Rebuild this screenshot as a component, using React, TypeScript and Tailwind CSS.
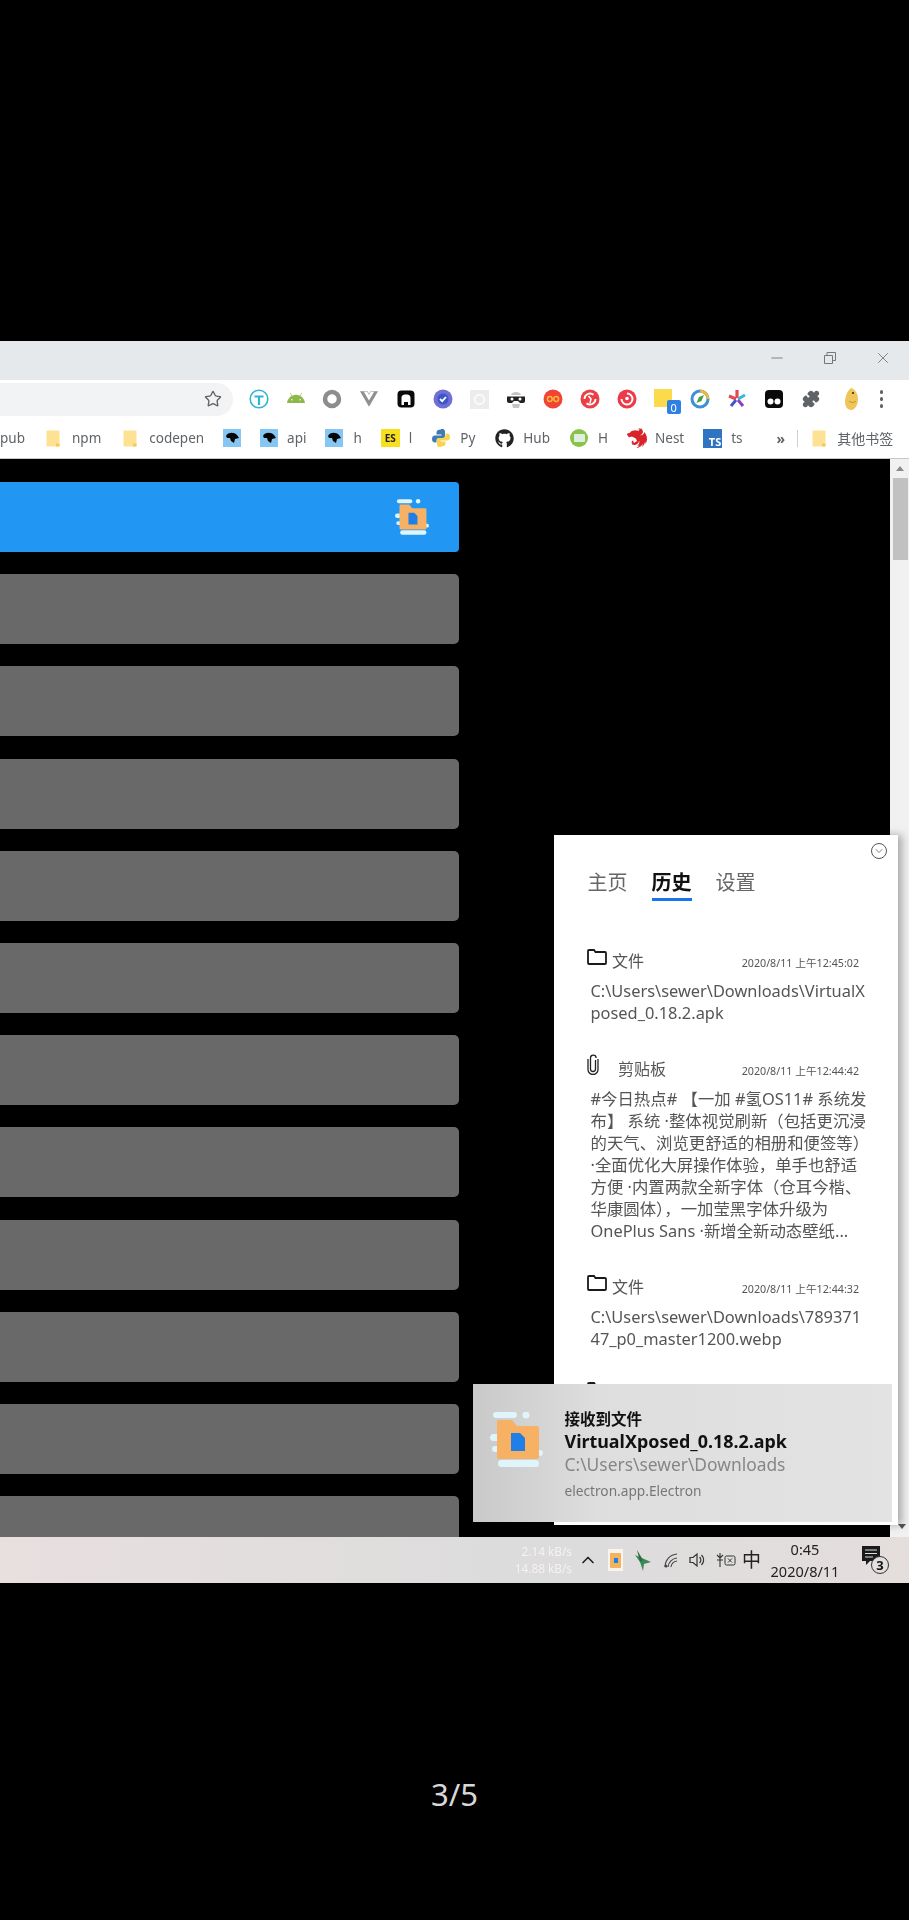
import { ChevronDown, ChevronUp, Minus, Puzzle, Star, X } from "lucide-react";
import { FaAndroid, FaGithub } from "react-icons/fa";
import { SiNestjs, SiVuedotjs } from "react-icons/si";

const FONT = "font-['Noto_Sans','Noto_Sans_CJK_SC',sans-serif]";

const FolderLogo = ({ className }: { className: string }) => (
  <svg viewBox="0 0 53 55" className={className}>
    <rect x="3" y="0" width="24" height="6" rx="3" fill="#dff5fb" />
    <circle cx="36" cy="3" r="3.5" fill="#dff5fb" />
    <rect x="0" y="22" width="10" height="7" rx="3.5" fill="#dff5fb" />
    <rect x="2" y="34" width="8" height="6" rx="3" fill="#dff5fb" />
    <rect x="44" y="38" width="9" height="6" rx="3" fill="#dff5fb" />
    <rect x="8" y="48" width="41" height="7" rx="3.5" fill="#dff5fb" />
    <path d="M7 10a2 2 0 0 1 2-2h13l5 6h20a2 2 0 0 1 2 2v29a2 2 0 0 1-2 2H9a2 2 0 0 1-2-2z" fill="#f6b164" />
    <path d="M21 21h9l5 5v13H21z" fill="#1f7fe6" />
  </svg>
);

const BookmarkFolder = () => (
  <svg viewBox="0 0 14 17" className="h-[17px] w-[14px]">
    <path d="M0.5 1.5a1 1 0 0 1 1-1h11a1 1 0 0 1 1 1v14a1 1 0 0 1-1 1h-11a1 1 0 0 1-1-1z" fill="#fde293" />
    <path d="M10 16.5h3.5v-3H10z" fill="#f4c95d" />
  </svg>
);

const DogIcon = () => (
  <div className="flex h-[18px] w-[18px] items-center justify-center bg-[#85c7f2]">
    <svg viewBox="0 0 18 18" className="h-[18px] w-[18px]">
      <path d="M3 7C5 3 11 3 14 6l2 3-4 1-1 4-3-2-1-3-3 0z" fill="#050505" />
    </svg>
  </div>
);

const PythonIcon = () => (
  <svg viewBox="0 0 18 18" className="h-[18px] w-[18px]">
    <path d="M9 0.5c-3 0-4.5 1-4.5 3v2h5v1H3c-2 0-3 1.200-3 3.500s1 3.500 3 3.500h1.500v-2c0-1.500 1-2.500 2.500-2.500h4c1.200 0 2-.8 2-2v-4.500c0-2-2-3-4-3z" fill="#3f7cb5" />
    <path d="M9 17.500c3 0 4.500-1 4.500-3v-2h-5v-1H15c2 0 3-1.200 3-3.500s-1-3.500-3-3.500h-1.500v2c0 1.500-1 2.500-2.500 2.500H7c-1.200 0-2 .8-2 2v4.500c0 2 2 3 4 3z" fill="#fbd34e" />
  </svg>
);

const ToolSlot = ({ children }: { children: React.ReactNode }) => (
  <div className="flex w-[36.800px] items-center justify-center">{children}</div>
);

const ToolbarIcons = () => (
  <div className="ml-[7.500px] flex items-center">
    <ToolSlot>
      <svg viewBox="0 0 20 20" className="h-[20px] w-[20px]">
        <circle cx="10" cy="10" r="8.800" fill="none" stroke="#2fb6d0" strokeWidth="1.600" />
        <path d="M5.500 6.500h9v2h-3.400v7.500h-2.200v-7.500h-3.400z" fill="#2fb6d0" />
      </svg>
    </ToolSlot>
    <ToolSlot>
      <FaAndroid className="h-[18px] w-[18px] text-[#8fb84a]" />
    </ToolSlot>
    <ToolSlot>
      <svg viewBox="0 0 20 20" className="h-[20px] w-[20px]">
        <circle cx="10" cy="10" r="7" fill="none" stroke="#8d8d8d" strokeWidth="4.500" />
      </svg>
    </ToolSlot>
    <ToolSlot>
      <SiVuedotjs className="h-[18px] w-[18px] text-[#8f8f8f]" />
    </ToolSlot>
    <ToolSlot>
      <svg viewBox="0 0 18 18" className="h-[18px] w-[18px]">
        <rect x="0.500" y="0.500" width="17" height="17" rx="4" fill="#0a0a0a" />
        <path d="M4.500 15V8c0-2 1-3.500 4.500-3.500S13.500 6 13.500 8v7H11v-3H7v3z" fill="#fff" />
      </svg>
    </ToolSlot>
    <ToolSlot>
      <svg viewBox="0 0 20 20" className="h-[20px] w-[20px]">
        <circle cx="10" cy="10" r="9.500" fill="#6f6fd6" />
        <circle cx="10" cy="10" r="5.500" fill="#3a56c8" />
        <path d="M7 10l2.200 2.200L13 8" fill="none" stroke="#fff" strokeWidth="1.800" />
      </svg>
    </ToolSlot>
    <ToolSlot>
      <svg viewBox="0 0 20 20" className="h-[19px] w-[19px]">
        <rect width="20" height="20" fill="#ececec" />
        <circle cx="10" cy="10" r="5" fill="none" stroke="#fafafa" strokeWidth="2" />
      </svg>
    </ToolSlot>
    <ToolSlot>
      <svg viewBox="0 0 20 20" className="h-[20px] w-[20px]">
        <path d="M5 6c1-4 9-4 10 0z" fill="#c4c4c4" />
        <path d="M1 7.500h18v4.500c0 1-1 2-2 2h-3l-2-2H8l-2 2H3c-1 0-2-1-2-2z" fill="#222" />
        <circle cx="6" cy="10" r="1.500" fill="#fff" />
        <circle cx="14" cy="10" r="1.500" fill="#fff" />
        <path d="M6 15h8l-1 4H7z" fill="#c4c4c4" />
      </svg>
    </ToolSlot>
    <ToolSlot>
      <svg viewBox="0 0 20 20" className="h-[20px] w-[20px]">
        <circle cx="10" cy="10" r="9.500" fill="#ef4437" />
        <circle cx="6.800" cy="10" r="2.400" fill="none" stroke="#f7b733" strokeWidth="1.500" />
        <circle cx="13.200" cy="10" r="2.400" fill="none" stroke="#f7b733" strokeWidth="1.500" />
      </svg>
    </ToolSlot>
    <ToolSlot>
      <svg viewBox="0 0 20 20" className="h-[20px] w-[20px]">
        <circle cx="10" cy="10" r="9.500" fill="#e93f45" />
        <path d="M4.500 10a5.500 5.500 0 0 1 9-4.200M15.500 10a5.500 5.500 0 0 1-9 4.200" fill="none" stroke="#fff" strokeWidth="1.800" />
        <path d="M8.500 7l2.500 3-1 4" fill="none" stroke="#fff" strokeWidth="1.500" />
      </svg>
    </ToolSlot>
    <ToolSlot>
      <svg viewBox="0 0 20 20" className="h-[20px] w-[20px]">
        <circle cx="10" cy="10" r="9.500" fill="#ee3a48" />
        <path d="M10 4.500a5.500 5.500 0 1 1-5.500 5.500" fill="none" stroke="#fff" strokeWidth="2" />
        <circle cx="10" cy="9.500" r="1.800" fill="#fff" />
      </svg>
    </ToolSlot>
    <ToolSlot>
      <div className="relative h-[20px] w-[20px]">
        <div className="h-[18px] w-[18px] bg-[#fbdb4b]" />
        <div className={`absolute -right-[7px] -bottom-[5px] flex h-[14px] w-[14px] items-center justify-center rounded-[2px] bg-[#2f80e4] text-[11px] leading-none text-white ${FONT}`}>
          0
        </div>
      </div>
    </ToolSlot>
    <ToolSlot>
      <svg viewBox="0 0 20 20" className="h-[20px] w-[20px]">
        <circle cx="10" cy="10" r="8" fill="#fff" stroke="#3f8fdc" strokeWidth="3" />
        <path d="M10 2a8 8 0 0 1 8 8" fill="none" stroke="#e9b93a" strokeWidth="3" />
        <path d="M14 6l-2.500 6-5 2 2.500-6z" fill="#4aa04a" />
      </svg>
    </ToolSlot>
    <ToolSlot>
      <svg viewBox="0 0 20 20" className="h-[20px] w-[20px]">
        <path d="M10 1v8" stroke="#e5484d" strokeWidth="3.200" />
        <path d="M2 7l7 3" stroke="#e5484d" strokeWidth="3" />
        <path d="M18 6l-7 4" stroke="#38b6d8" strokeWidth="3" />
        <path d="M9 11l-5 6" stroke="#4555c9" strokeWidth="3" />
        <path d="M11 11l5 6" stroke="#8a3fc0" strokeWidth="3" />
      </svg>
    </ToolSlot>
    <ToolSlot>
      <svg viewBox="0 0 18 18" className="h-[18px] w-[18px]">
        <rect width="18" height="18" rx="4" fill="#0a0a0a" />
        <circle cx="5.500" cy="11.500" r="3" fill="#fff" />
        <circle cx="12.500" cy="11.500" r="3" fill="#fff" />
      </svg>
    </ToolSlot>
    <ToolSlot>
      <Puzzle className="h-[18px] w-[18px] fill-[#5f6368] text-[#5f6368]" />
    </ToolSlot>
    <div className="flex w-[44px] items-center justify-center">
      <svg viewBox="0 0 16 24" className="h-[24px] w-[16px]">
        <path d="M8 1c4 1 7 6 7 11 0 6-3 11-7 11-3 0-6-3-6-8C2 9 5 3 8 1z" fill="#eec65a" />
        <circle cx="10" cy="6" r="1" fill="#222" />
        <path d="M6 14c2 2 5 2 7 0" stroke="#bb8f2d" fill="none" />
      </svg>
    </div>
    <div className="flex w-[16px] flex-col items-center gap-[3.500px]">
      <div className="h-[3.500px] w-[3.500px] rounded-full bg-[#5f6368]" />
      <div className="h-[3.500px] w-[3.500px] rounded-full bg-[#5f6368]" />
      <div className="h-[3.500px] w-[3.500px] rounded-full bg-[#5f6368]" />
    </div>
  </div>
);

const BookmarkBar = () => (
  <div className={`flex h-[41px] items-center border-b border-[#c8c8c8] bg-white text-[13.500px] text-[#5f6368] ${FONT}`}>
    <span className="w-[25px] text-right">pub</span>
    <div className="ml-[21px]"><BookmarkFolder /></div>
    <span className="ml-[12px]">npm</span>
    <div className="ml-[22px]"><BookmarkFolder /></div>
    <span className="ml-[12px]">codepen</span>
    <div className="ml-[19px]"><DogIcon /></div>
    <div className="ml-[19px]"><DogIcon /></div>
    <span className="ml-[9px]">api</span>
    <div className="ml-[19px]"><DogIcon /></div>
    <span className="ml-[10px]">h</span>
    <div className="ml-[19px] flex h-[18px] w-[19px] items-center justify-center bg-[#f7df1e] text-[10px] font-bold text-[#222]">ES</div>
    <span className="ml-[9px]">l</span>
    <div className="ml-[20px]"><PythonIcon /></div>
    <span className="ml-[10px]">Py</span>
    <FaGithub className="ml-[20px] h-[19px] w-[19px] text-[#222]" />
    <span className="ml-[9px]">Hub</span>
    <div className="ml-[20px] flex h-[18px] w-[18px] items-center justify-center rounded-full bg-[#8bc34a]">
      <div className="h-[8px] w-[11px] rounded-[1px] bg-[#dfeede]" />
    </div>
    <span className="ml-[10px]">H</span>
    <SiNestjs className="ml-[19px] h-[20px] w-[20px] text-[#d8232a]" />
    <span className="ml-[8px]">Nest</span>
    <div className="ml-[19px] flex h-[19px] w-[19px] items-end justify-end bg-[#2f74c0] pr-[1px] text-[11px] leading-[13px] font-bold text-white">TS</div>
    <span className="ml-[9px]">ts</span>
    <span className="ml-[34px] text-[14px] font-bold">»</span>
    <div className="ml-[12px] h-[17px] w-px bg-[#d0d0d0]" />
    <div className="ml-[14px]"><BookmarkFolder /></div>
    <span className="ml-[11px] text-[14px]">其他书签</span>
  </div>
);

const FolderOutline = () => (
  <svg viewBox="0 0 20 16" className="h-[16px] w-[20px]">
    <path d="M1 14V2a1 1 0 0 1 1-1h5l1.500 2H18a1 1 0 0 1 1 1v10a1 1 0 0 1-1 1H2a1 1 0 0 1-1-1z" fill="none" stroke="#1a1a1a" strokeWidth="1.800" />
  </svg>
);

const Clip = () => (
  <svg viewBox="0 0 12 21" className="h-[21px] w-[12px]">
    <path d="M8.500 6v9a2.500 2.500 0 0 1-5 0V4a2.800 2.800 0 0 1 5.600 0" fill="none" stroke="#222" strokeWidth="1.300" />
    <path d="M11 5v10.500a5 5 0 0 1-10 0V5" fill="none" stroke="#222" strokeWidth="1.300" />
  </svg>
);

const history = [
  {
    label: "文件",
    date: "2020/8/11 上午12:45:02",
    lines: ["C:\\Users\\sewer\\Downloads\\VirtualX", "posed_0.18.2.apk"],
  },
  {
    label: "剪贴板",
    date: "2020/8/11 上午12:44:42",
    lines: [
      "#今日热点# 【一加 #氢OS11# 系统发",
      "布】 系统 ·整体视觉刷新（包括更沉浸",
      "的天气、浏览更舒适的相册和便签等）",
      "·全面优化大屏操作体验，单手也舒适",
      "方便 ·内置两款全新字体（仓耳今楷、",
      "华康圆体），一加莹黑字体升级为",
      "OnePlus Sans ·新增全新动态壁纸...",
    ],
  },
  {
    label: "文件",
    date: "2020/8/11 上午12:44:32",
    lines: ["C:\\Users\\sewer\\Downloads\\789371", "47_p0_master1200.webp"],
  },
];

const HistoryPanel = () => (
  <div className={`absolute top-[494px] left-[554px] h-[690px] w-[344px] overflow-hidden bg-white shadow-[4px_0_8px_rgba(0,0,0,0.3)] ${FONT}`}>
    <div className="flex justify-end pt-[8px] pr-[11px]">
      <div className="flex h-[16px] w-[16px] items-center justify-center rounded-full border border-[#555]">
        <ChevronDown className="h-[12px] w-[12px] text-[#555]" strokeWidth={1.500} />
      </div>
    </div>
    <div className="mt-[10px] flex gap-[24px] pl-[33.500px] text-[20px] leading-[28px] text-[#666]">
      <span>主页</span>
      <span className="relative font-bold text-[#111]">
        历史
        <span className="absolute top-[29px] left-0 h-[3px] w-full bg-[#1a73e8]" />
      </span>
      <span>设置</span>
    </div>
    <div className="mt-[50.500px] pl-[33px]">
      {history.map((item) => (
        <div key={item.date} className="mb-[32px] w-[272px]">
          <div className="flex h-[24px] items-center">
            <div className="-mt-[6px] w-[25px]">
              {item.label === "文件" ? <FolderOutline /> : <Clip />}
            </div>
            <span className={`mt-[3px] text-[16px] text-[#555] ${item.label === "文件" ? "" : "ml-[6px]"}`}>{item.label}</span>
            <span className="mt-[8px] ml-auto text-[10.700px] whitespace-nowrap text-[#555]">{item.date}</span>
          </div>
          <div className="mt-[8px] pl-[3.500px] text-[16.400px] leading-[22px] whitespace-nowrap text-[#555]">
            {item.lines.map((line) => (
              <div key={line}>{line}</div>
            ))}
          </div>
        </div>
      ))}
      <FolderOutline />
    </div>
  </div>
);

const Toast = () => (
  <div className={`absolute top-[1043px] left-[473px] flex h-[138px] w-[419px] bg-gradient-to-r from-[#c9c9c9] via-[#dedede] via-30% to-[#e3e3e3] ${FONT}`}>
    <FolderLogo className="mt-[28px] ml-[17px] h-[55px] w-[53px]" />
    <div className="mt-[24px] ml-[21.500px]">
      <div className="text-[15.500px] leading-[22px] font-bold text-[#111]">接收到文件</div>
      <div className="text-[17.900px] leading-[23px] font-bold text-[#111]">VirtualXposed_0.18.2.apk</div>
      <div className="text-[17.400px] leading-[23px] text-[#868686]">C:\Users\sewer\Downloads</div>
      <div className="mt-[5px] text-[13.700px] leading-[20px] text-[#777]">electron.app.Electron</div>
    </div>
  </div>
);

const Tray = () => (
  <div className={`flex h-[46px] items-center bg-gradient-to-r from-[#e8dfdf] via-[#dcdcdc] via-60% to-[#e4dedd] ${FONT}`}>
    <div className="ml-[510px] w-[62px] text-right text-[11.800px] leading-[17px] text-[#f7f1ef]">
      <div>2.14 kB/s</div>
      <div>14.88 kB/s</div>
    </div>
    <ChevronUp className="ml-[6px] h-[20px] w-[20px] text-[#222]" strokeWidth={2} />
    <div className="ml-[10px] flex h-[22px] w-[15px] items-center justify-center bg-[#f7f4ee]">
      <div className="flex h-[15px] w-[11px] items-center justify-center rounded-[1px] bg-[#f2b25f]">
        <div className="h-[5px] w-[4px] bg-[#1f7fe6]" />
      </div>
    </div>
    <svg viewBox="0 0 18 22" className="ml-[11px] h-[22px] w-[18px]">
      <path d="M1 6l16 7-7 2-1 7-3-9z" fill="#3a8a55" />
      <path d="M3 1l6 10-3 2z" fill="#2c6e45" />
    </svg>
    <svg viewBox="0 0 16 16" className="ml-[11px] h-[16px] w-[16px]">
      <path d="M2 15a13 13 0 0 1 12-13M5 15a10 10 0 0 1 9-9M8 15a7 7 0 0 1 6-6" fill="none" stroke="#444" strokeWidth="1.100" />
      <circle cx="3" cy="14" r="1.500" fill="#444" />
    </svg>
    <svg viewBox="0 0 18 18" className="ml-[9px] h-[18px] w-[18px]">
      <path d="M2 6.500h3l4-3.500v12l-4-3.500H2z" fill="none" stroke="#333" strokeWidth="1.200" />
      <path d="M11.500 6a4 4 0 0 1 0 6M13.500 4a7 7 0 0 1 0 10" fill="none" stroke="#333" strokeWidth="1.200" />
    </svg>
    <svg viewBox="0 0 20 16" className="ml-[10px] h-[16px] w-[20px]">
      <path d="M4 1v14M1 3l3 3 3-3M1 8h6" fill="none" stroke="#333" strokeWidth="1.100" />
      <rect x="9" y="4" width="10" height="9" rx="1.500" fill="none" stroke="#333" />
      <path d="M12 6.500l4 4M16 6.500l-4 4" stroke="#333" />
    </svg>
    <span className="ml-[6px] w-[22px] text-[19px] leading-none text-[#222]">中</span>
    <div className="ml-[5px] w-[72px] text-center text-[14.500px] leading-[22px] text-[#222]">
      <div>0:45</div>
      <div>2020/8/11</div>
    </div>
    <div className="relative ml-[21px] h-[28px] w-[24px]">
      <svg viewBox="0 0 18 20" className="h-[20px] w-[18px]">
        <path d="M0 0h18v15h-10l-4 4v-4H0z" fill="#1a1a1a" />
        <path d="M3 4h12M3 7.500h12M3 11h8" stroke="#ddd" />
      </svg>
      <div className="absolute top-[10px] left-[9px] flex h-[18px] w-[18px] items-center justify-center rounded-full border border-[#333] bg-[#e2dfdf] text-[13px] leading-none font-bold text-[#111]">
        3
      </div>
    </div>
  </div>
);

const App = () => {
  const rows = Array.from({ length: 12 }, (_, i) => i);

  return (
    <div className={`flex h-[1920px] w-[909px] flex-col overflow-hidden bg-black ${FONT}`}>
      <div className="h-[341px]" />
      <div className="relative flex h-[1242px] flex-col overflow-hidden blur-[0.5px]">
        <div className="flex h-[39px] justify-end bg-[#e6e9ec]">
          <div className="flex h-[33px] w-[53px] items-center justify-center">
            <Minus className="h-[18px] w-[18px] text-[#777]" strokeWidth={1.200} />
          </div>
          <div className="flex h-[33px] w-[53px] items-center justify-center">
            <svg viewBox="0 0 12 12" className="h-[12px] w-[12px]">
              <path d="M0.500 3.500h8v8h-8zM3 3.500v-3h8.500v8h-3" fill="none" stroke="#777" />
            </svg>
          </div>
          <div className="flex h-[33px] w-[53px] items-center justify-center">
            <X className="h-[18px] w-[18px] text-[#777]" strokeWidth={1.200} />
          </div>
        </div>
        <div className="flex h-[38px] items-center bg-white">
          <div className="flex h-[33px] w-[233px] items-center justify-end rounded-r-full bg-[#f1f3f4] pr-[11px]">
            <Star className="h-[18px] w-[18px] text-[#5f6368]" strokeWidth={1.800} />
          </div>
          <ToolbarIcons />
        </div>
        <BookmarkBar />
        <div className="flex min-h-0 flex-1 bg-black">
          <div className="flex-1 overflow-hidden pt-[23px]">
            <div className="relative mb-[22.200px] flex h-[70px] w-[459px] items-center justify-end rounded-r-[4px] bg-[#2196f3] pr-[30px]">
              <FolderLogo className="h-[36px] w-[34px]" />
            </div>
            {rows.map((row) => (
              <div key={row} className="mb-[22.200px] h-[70px] w-[459px] rounded-r-[5px] bg-[#696969]" />
            ))}
          </div>
          <div className="flex w-[19px] flex-col items-center bg-[#f1f1f1]">
            <div className="mt-[7px] h-0 w-0 border-x-[4px] border-b-[5px] border-x-transparent border-b-[#8a8a8a]" />
            <div className="mt-[7px] ml-[2px] h-[82px] w-[15px] bg-[#c1c1c1]" />
            <div className="mt-auto mb-[8px] ml-[4px] h-0 w-0 border-x-[4px] border-t-[5px] border-x-transparent border-t-[#555]" />
          </div>
        </div>
        <Tray />
        <HistoryPanel />
        <Toast />
      </div>
      <div className="flex flex-1 items-start justify-center pt-[194px] text-[31px] leading-[34px] text-[#d8d8d8]">3/5</div>
    </div>
  );
};

export default App;
